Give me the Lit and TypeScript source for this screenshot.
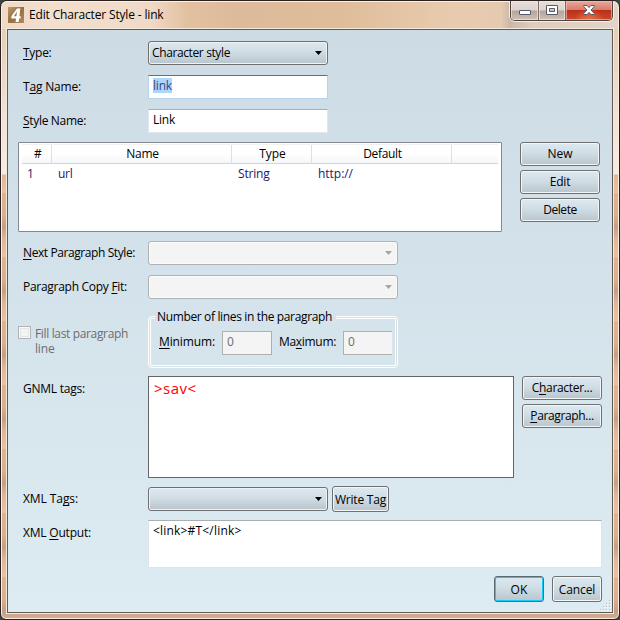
import { LitElement, html, css, svg, nothing } from "lit";
import { customElement, property } from "lit/decorators.js";

/** A run of text set to an exact advance width, with an optional underlined access key. */
@customElement("fit-text")
export class FitText extends LitElement {
  @property() text = "";
  @property({ type: Number }) width = 0;
  @property({ type: Number }) key = -1;

  static styles = css`
    :host { display: block; white-space: pre; flex: none; }
    .run { display: inline-block; }
    .key { text-decoration: underline; text-decoration-skip-ink: none; text-underline-offset: 2px; text-decoration-thickness: 1px; }
  `;

  updated() {
    const run = this.renderRoot.querySelector<HTMLElement>(".run");
    if (!run || !this.width) return;
    run.style.letterSpacing = "0px";
    const natural = run.getBoundingClientRect().width;
    const step = (this.width - natural) / this.text.length;
    run.style.letterSpacing = `${step}px`;
  }

  render() {
    const { text, key } = this;
    return key < 0
      ? html`<span class="run">${text}</span>`
      : html`<span class="run">${text.slice(0, key)}<span class="key">${text[key]}</span>${text.slice(key + 1)}</span>`;
  }
}

const t = (text: string, width: number, key = -1) =>
  html`<fit-text .text=${text} .width=${width} .key=${key}></fit-text>`;

@customElement("ui-button")
export class UiButton extends LitElement {
  static styles = css`
    :host {
      display: flex; align-items: center; justify-content: center; box-sizing: border-box;
      height: 24px; border: 1px solid #707070; border-radius: 3px;
      background: linear-gradient(#dce9f0, #d0dde4 45%, #b9c5cd);
      box-shadow: inset 0 0 0 1px #f2f6f8;
    }
    :host([focused]) { border-color: #5c6b73; box-shadow: inset 0 0 0 1px #14cbfa; }
  `;
  render() { return html`<slot></slot>`; }
}

@customElement("ui-combo")
export class UiCombo extends LitElement {
  static styles = css`
    :host {
      display: flex; align-items: center; justify-content: space-between; box-sizing: border-box;
      height: 24px; padding: 0 5px 0 3px; border: 1px solid #707070; border-radius: 3px;
      background: linear-gradient(#dce9f0, #d0dde4 45%, #b9c5cd);
      box-shadow: inset 0 0 0 1px #edf2f5; color: #000;
    }
    :host([disabled]) { background: #f4f4f4; border-color: #adb2b5; box-shadow: inset 0 0 0 1px #fbfbfb; }
    .arrow { display: block; fill: #000; }
    :host([disabled]) .arrow { fill: #a5a5a5; }
  `;
  render() {
    return html`<span><slot></slot></span>
      <svg class="arrow" width="7" height="4" viewBox="0 0 7 4"><path d="M0 0H7L3.5 4Z" /></svg>`;
  }
}

@customElement("app-root")
export class AppRoot extends LitElement {
  static styles = css`
    * { box-sizing: border-box; }
    :host {
      display: block; width: 620px; height: 620px; background: #3a4444; overflow: hidden;
      font: 12px/16px "Open Sans", "Noto Sans", sans-serif; color: #000;
    }
    .window {
      display: flex; flex-direction: column; width: 620px; height: 620px; padding: 0 6px 6px;
      border: 1px solid #29211e; border-radius: 7px 7px 6px 6px; box-shadow: inset 0 0 0 1px #fbeee2;
      background:
        linear-gradient(#e7c9ac 0, #e8d0b9 40px, #f3e2d7 120px, #f6ece6 173px, transparent 174px),
        repeating-linear-gradient(#dcb393 0, #d9b090 22px, #c39e89 34px, #dfb899 46px, #e7c2a5 64px);
    }
    .title { display: flex; height: 28px; flex: none; justify-content: space-between; margin: 0 -5px; padding: 0 5px;
      background: linear-gradient(90deg, #efd9c7 0, #f3dfce 8%, #f0dac7 24%, #e2c1a1 30%, #ddbb9a 38%, #dfbd9a 55%, #e8cbae 73%, #e6cab0 81%, #cbb8a9 82.5%, #ddcdbf 86%, #e2d4c6 100%);
      border-top: 1px solid #fcf1e8; border-radius: 6px 6px 0 0; }
    .caption { display: flex; gap: 5px; padding: 5px 0 0 1px; }
    .logo { display: block; }
    .controls { display: flex; width: 103px; height: 20px; margin-top: -1px; border: 1px solid #50433e; border-top: 0;
      border-radius: 0 0 5px 5px; box-shadow: 0 1px 0 #f8eee7, 1px 0 0 #f8eee7, -1px 0 0 #f8eee7; overflow: hidden; }
    .ctl { display: flex; align-items: flex-start; justify-content: center; width: 27px; padding-top: 1px; border-right: 1px solid #796b66;
      background: linear-gradient(#e8dfda, #dcd3ce 48%, #b4a59b 52%, #cec0b5); box-shadow: inset 0 0 0 1px #f4ece7aa; }
    .ctl.min { width: 28px; }
    .ctl.close { flex: 1; border-right: 0; border-left: 0;
      background: radial-gradient(ellipse at 50% 115%, #ea8050 0, transparent 48%), linear-gradient(#eaa99d, #d87b6b 46%, #bb301b 50%, #cc482b);
      box-shadow: inset 0 0 0 1px #f3c0b5aa; }
    .client { position: relative; display: flex; flex-direction: column; flex: 1; min-height: 0;
      padding: 11px 10px 0 15px; border: 1px solid #625a50; box-shadow: 0 0 0 1px #f7e9dc;
      background: linear-gradient(#cddbe5, #ddecf2); }
    .row { display: flex; flex: none; margin-bottom: 10px; }
    .row.tight { margin-bottom: 8px; }
    .label { width: 125px; flex: none; padding-top: 4px; }
    .label.low { padding-top: 5px; }
    .short { width: 180px; }
    .long { width: 250px; }
    .input { height: 24px; padding: 2px 0 0 4px; border: 1px solid #e2e6ec; border-top-color: #abadb3; background: #fff; }
    .input.active { border-color: #b5d3ec; border-top-color: #3d7bad; }
    .selected { display: block; height: 15px; width: 19px; background: #add6ff; color: #35487c; }
    .wide { margin: -1px 0 9px -5px; gap: 18px; }
    .stack { display: flex; flex-direction: column; flex: none; gap: 4px; width: 80px; }
    .table { width: 484px; flex: none; height: 90px; padding: 1px 3px; border: 1px solid #828790; background: #fff; border-radius: 1px; }
    .cols { display: grid; grid-template-columns: 30px 180px 80px 140px 1fr; }
    .head { height: 20px; border-top: 1px solid #f1f1f2; border-bottom: 1px solid #d5d5d5; background: linear-gradient(#fff 45%, #f5f6f8); }
    .head div { display: flex; justify-content: center; padding: 1px 0 0 2px; border-right: 1px solid #dfdfdf; }
    .head div:last-child { border-right: 0; }
    .body { color: #191970; padding-top: 2px; }
    .body div { padding-left: 6px; }
    .body div:first-child { padding-left: 5px; }
    .fit { height: 59px; margin: 0 0 8px -5px; }
    .check { display: flex; width: 130px; gap: 4px; padding-top: 17px; color: #6d6d6d; line-height: 15px; }
    .box { width: 13px; height: 13px; border: 1px solid #b1b4b6; background: #f4f4f4; box-shadow: inset 0 0 0 1px #f8f8f8, inset 0 0 0 2px #e5e5e5; }
    .group { position: relative; width: 250px; height: 52px; margin-top: 7px; border: 1px solid #fff; border-radius: 4px;
      box-shadow: inset 0 0 0 1px #d5dfe5, inset 0 0 0 2px #fff; padding: 14px 0 0 10px; display: flex; align-items: flex-start; }
    .group > fit-text { padding-top: 3px; }
    .legend { position: absolute; left: 6px; top: -8px; padding: 0 2px; width: 181px; background: #d5e3ec; }
    .num { height: 24px; padding: 2px 0 0 4px; border: 1px solid #afafaf; background: #f4f4f4; color: #6d6d6d; }
    .num.a { width: 50px; margin: 0 7px; }
    .num.b { width: 49px; margin: 0 0 0 7px; border-right: 0; }
    .gnml { width: 366px; flex: none; height: 102px; margin-right: 8px; border: 1px solid #646464; background: #fff;
      padding: 1px 0 0 5px; color: #f00; font-size: 15px; line-height: 20px; }
    .tags { align-items: center; gap: 4px; }
    .tags .label { margin-right: -4px; padding: 0; }
    .write { width: 57px; height: 26px; padding-top: 1px; }
    .output { width: 454px; flex: none; height: 48px; padding: 2px 0 0 4px; border: 1px solid #e2e3ea; border-top-color: #abadb3; background: #fff; }
    .actions { justify-content: flex-end; gap: 8px; margin: 0; }
    .actions ui-button { width: 50px; height: 26px; padding-top: 1px; }
    .grip { position: absolute; right: 1px; bottom: 1px; display: block; }
  `;

  render() {
    const dots = [[9, 0], [6, 3], [9, 3], [3, 6], [6, 6], [9, 6], [0, 9], [3, 9], [6, 9], [9, 9]];
    return html`
      <div class="window">
        <div class="title">
          <div class="caption">
            <svg class="logo" width="16" height="16" viewBox="0 0 16 16">
              <defs><linearGradient id="g" x1="0" y1="0" x2="1" y2="1">
                <stop offset="0" stop-color="#c29a68" /><stop offset=".5" stop-color="#96703f" /><stop offset="1" stop-color="#b58d59" />
              </linearGradient></defs>
              <rect width="16" height="16" fill="url(#g)" />
              <path d="M9 1.5H12.4L11.4 9.2H12.8L12.5 11.4H11.1L10.6 15H7.6L8.1 11.4H3.2L3.5 9ZM8.9 4.6L6 9.2H8.4Z" fill="#fff" fill-rule="evenodd" />
            </svg>
            ${t("Edit Character Style - link", 134.5)}
          </div>
          <div class="controls">
            <div class="ctl min"><svg width="12" height="16" viewBox="0 0 12 16"><rect x=".5" y="8.5" width="11" height="4" rx=".5" fill="#fff" stroke="#555a6b" /></svg></div>
            <div class="ctl"><svg width="12" height="16" viewBox="0 0 12 16"><path d="M.5 3.5H11.5V12.5H.5ZM3.5 6.5V9.5H8.5V6.5Z" fill="#fff" fill-rule="evenodd" stroke="#555a6b" /></svg></div>
            <div class="ctl close"><svg width="12" height="16" viewBox="0 0 12 16"><path d="M.7 3.5H4.1L6 5.6L7.9 3.5H11.3V4.5L8 8L11.3 11.5V12.5H7.9L6 10.4L4.1 12.5H.7V11.5L4 8L.7 4.5Z" fill="#fff" stroke="#555a6b" /></svg></div>
          </div>
        </div>
        <div class="client">
          <div class="row"><div class="label">${t("Type:", 28.5, 0)}</div><ui-combo class="short">${t("Character style", 78)}</ui-combo></div>
          <div class="row"><div class="label">${t("Tag Name:", 58, 1)}</div><div class="input active short"><span class="selected">${t("link", 19)}</span></div></div>
          <div class="row"><div class="label">${t("Style Name:", 63, 0)}</div><div class="input short">${t("Link", 22)}</div></div>
          <div class="row wide">
            <div class="table">
              <div class="cols head">
                <div>${t("#", 7)}</div><div>${t("Name", 32.5)}</div><div>${t("Type", 26.5)}</div><div>${t("Default", 38.5)}</div><div>${nothing}</div>
              </div>
              <div class="cols body">
                <div>${t("1", 7)}</div><div>${t("url", 14.5)}</div><div>${t("String", 31.5)}</div><div>${t("http://", 35)}</div>
              </div>
            </div>
            <div class="stack">
              <ui-button>${t("New", 25)}</ui-button><ui-button>${t("Edit", 20.5)}</ui-button><ui-button>${t("Delete", 33.5)}</ui-button>
            </div>
          </div>
          <div class="row"><div class="label">${t("Next Paragraph Style:", 112, 0)}</div><ui-combo class="long" disabled></ui-combo></div>
          <div class="row"><div class="label">${t("Paragraph Copy Fit:", 104, 15)}</div><ui-combo class="long" disabled></ui-combo></div>
          <div class="row fit">
            <div class="check"><div class="box"></div><div>${t("Fill last paragraph", 93)}${t("line", 19.5)}</div></div>
            <div class="group">
              <div class="legend">${t("Number of lines in the paragraph", 175)}</div>
              ${t("Minimum:", 56, 0)}<div class="num a">${t("0", 7)}</div>
              ${t("Maximum:", 57, 2)}<div class="num b">${t("0", 7)}</div>
            </div>
          </div>
          <div class="row tight">
            <div class="label low">${t("GNML tags:", 62)}</div>
            <div class="gnml">${t(">sav<", 42.5)}</div>
            <div class="stack"><ui-button>${t("Character...", 60.5, 1)}</ui-button><ui-button>${t("Paragraph...", 63.5, 0)}</ui-button></div>
          </div>
          <div class="row tags tight">
            <div class="label">${t("XML Tags:", 55, 6)}</div><ui-combo class="short"></ui-combo>
            <ui-button class="write">${t("Write Tag", 51)}</ui-button>
          </div>
          <div class="row tight"><div class="label low">${t("XML Output:", 68, 4)}</div><div class="output">${t("<link>#T</link>", 88.5)}</div></div>
          <div class="row actions"><ui-button focused>${t("OK", 17)}</ui-button><ui-button>${t("Cancel", 36.5)}</ui-button></div>
          <svg class="grip" width="11" height="11" viewBox="0 0 11 11">
            ${dots.map(([x, y]) => svg`<rect x=${x} y=${y} width="2" height="2" fill="#fff" /><rect x=${x} y=${y} width="1.3" height="1.3" fill="#b3bfca" />`)}
          </svg>
        </div>
      </div>
    `;
  }
}
